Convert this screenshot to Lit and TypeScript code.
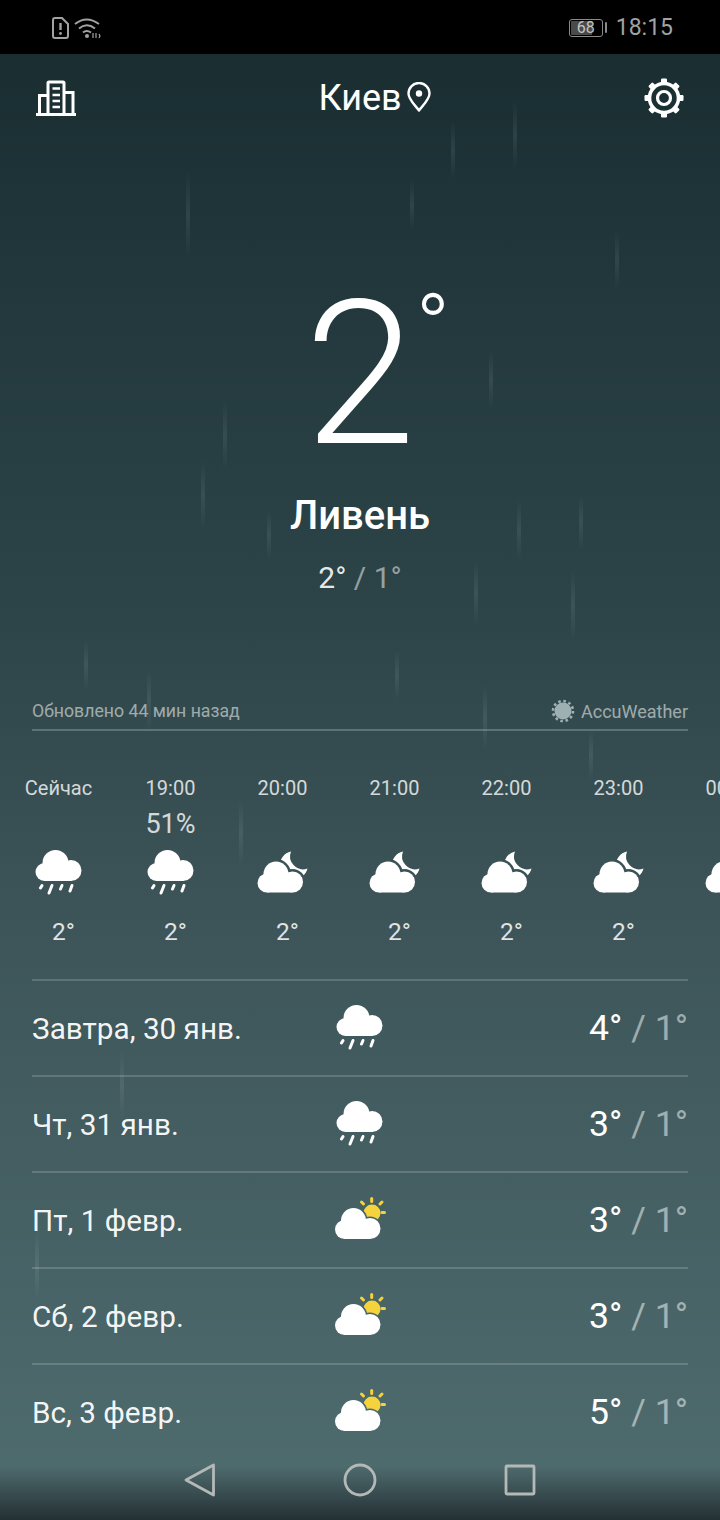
import { LitElement, html, css, svg } from 'lit';
import { customElement } from 'lit/decorators.js';

type IconName = 'rain' | 'night' | 'sun';

const hours: { time: string; pct: string; icon: IconName; temp: string }[] = [
  { time: 'Сейчас', pct: '', icon: 'rain', temp: '2°' },
  { time: '19:00', pct: '51%', icon: 'rain', temp: '2°' },
  { time: '20:00', pct: '', icon: 'night', temp: '2°' },
  { time: '21:00', pct: '', icon: 'night', temp: '2°' },
  { time: '22:00', pct: '', icon: 'night', temp: '2°' },
  { time: '23:00', pct: '', icon: 'night', temp: '2°' },
  { time: '00:00', pct: '', icon: 'night', temp: '2°' },
];

const days: { label: string; icon: IconName; high: string; low: string }[] = [
  { label: 'Завтра, 30 янв.', icon: 'rain', high: '4°', low: '1°' },
  { label: 'Чт, 31 янв.', icon: 'rain', high: '3°', low: '1°' },
  { label: 'Пт, 1 февр.', icon: 'sun', high: '3°', low: '1°' },
  { label: 'Сб, 2 февр.', icon: 'sun', high: '3°', low: '1°' },
  { label: 'Вс, 3 февр.', icon: 'sun', high: '5°', low: '1°' },
];

// x, top, height of the rain streaks in the background
const streaks = [
  [451, 120, 60], [186, 170, 90], [410, 180, 50], [513, 100, 70], [615, 230, 60],
  [223, 400, 70], [201, 460, 70], [489, 350, 60], [267, 510, 50], [517, 500, 60],
  [579, 495, 55], [474, 560, 65], [571, 570, 70], [84, 640, 50], [147, 670, 60],
  [395, 650, 50], [483, 685, 65], [589, 730, 50], [239, 800, 65], [120, 1050, 70],
  [35, 1230, 70],
];

function cloud(dx: number, dy: number) {
  return svg`<g transform="translate(${dx} ${dy})">
    <circle cx="18.5" cy="12.5" r="12.5"/>
    <circle cx="9.5" cy="21.5" r="9.5"/>
    <circle cx="35" cy="20.5" r="10.5"/>
    <rect x="9.5" y="14" width="25.5" height="17"/>
  </g>`;
}

function weatherIcon(name: IconName) {
  if (name === 'rain') {
    return html`<svg class="wicon" viewBox="0 0 52 48" fill="#fff">
      <circle cx="22.5" cy="14" r="13"/>
      <circle cx="11.5" cy="23" r="9"/>
      <circle cx="38" cy="21.5" r="10.5"/>
      <rect x="11.5" y="16" width="27" height="16"/>
      <g stroke="#fff" stroke-width="3" stroke-linecap="round">
        <path d="M9 36.5 7.5 39"/>
        <path d="M19 36.5 16 44"/>
        <path d="M29 36.5 27.5 40"/>
        <path d="M39 36.5 37 42"/>
      </g>
    </svg>`;
  }
  if (name === 'night') {
    return html`<svg class="wicon" viewBox="0 0 52 48" fill="#fff">
      <mask id="moon-cut" maskUnits="userSpaceOnUse" x="0" y="0" width="52" height="48">
        <rect width="52" height="48" fill="#fff"/>
        <g fill="#000" stroke="#000" stroke-width="5">${cloud(0.5, 12.5)}</g>
      </mask>
      <path d="M34 2.5A14 14 0 1 0 50.5 19.5 13 13 0 0 1 34 2.5Z" mask="url(#moon-cut)"/>
      ${cloud(0.5, 12.5)}
    </svg>`;
  }
  return html`<svg class="wicon" viewBox="0 0 52 48" fill="#fff">
    <mask id="sun-cut" maskUnits="userSpaceOnUse" x="0" y="0" width="52" height="48">
      <rect width="52" height="48" fill="#fff"/>
      <g fill="#000" stroke="#000" stroke-width="3">${cloud(1, 12)}</g>
    </mask>
    <g stroke="#f4d33c" stroke-width="3" stroke-linecap="round">
      <path d="M37.7 2.5V5.5"/>
      <path d="M27.5 6 29.5 8"/>
      <path d="M48 6 46 8"/>
      <path d="M48 16.5H50.5"/>
    </g>
    <circle cx="38" cy="17" r="8.5" fill="#f4d33c" mask="url(#sun-cut)"/>
    ${cloud(1, 12)}
  </svg>`;
}

function gear() {
  const teeth = [0, 45, 90, 135, 180, 225, 270, 315];
  return html`<svg class="hicon" viewBox="0 0 40 44" fill="none" stroke="#fff">
    <circle cx="20" cy="22" r="14.5" stroke-width="3.6"/>
    <circle cx="20" cy="22" r="6.5" stroke-width="3.2"/>
    ${teeth.map(
      (a) => svg`<rect x="17" y="2.5" width="6" height="6" rx="1.2" fill="#fff" stroke="none"
        transform="rotate(${a} 20 22)"/>`
    )}
  </svg>`;
}

@customElement('app-root')
export class AppRoot extends LitElement {
  static styles = css`
    :host {
      display: block;
      width: 720px;
      height: 1520px;
      overflow: hidden;
      font-family: Roboto, "Noto Sans", sans-serif;
      color: #fff;
    }

    .screen {
      position: relative;
      display: flex;
      flex-direction: column;
      height: 1520px;
      overflow: hidden;
      background: linear-gradient(#1a2e32 54px, #2c4448 600px, #3c5458 900px, #4e6b6e 1480px);
    }

    .streak {
      position: absolute;
      width: 4px;
      background: linear-gradient(transparent, rgba(255, 255, 255, 0.08), transparent);
    }

    .status {
      position: relative;
      display: flex;
      align-items: center;
      height: 54px;
      flex: none;
      padding: 1px 47px 0 52px;
      box-sizing: border-box;
      background: #000;
      color: #a2a2a2;
    }
    .sim { width: 17px; height: 22px; }
    .wifi { width: 27px; height: 22px; margin-left: 5px; }
    .batt {
      margin-left: auto;
      box-sizing: border-box;
      width: 34px;
      height: 18px;
      border: 1.5px solid #8a8a8a;
      border-radius: 3px;
      background: linear-gradient(90deg, #4a4a4a 68%, transparent 68%);
      background-clip: content-box;
      padding: 1px;
      color: #c4c4c4;
      font-size: 16px;
      line-height: 13px;
      text-align: center;
    }
    .nub { width: 2px; height: 11px; background: #8a8a8a; margin-left: 2px; border-radius: 1px; }
    .clock { font-size: 23px; margin-left: 9px; }

    .header {
      position: relative;
      display: grid;
      grid-template-columns: 1fr auto 1fr;
      align-items: center;
      padding: 22px 36px 0;
    }
    .hicon { width: 40px; height: 44px; display: block; }
    .city { font-size: 36px; line-height: 44px; }
    .header-right { display: flex; align-items: center; justify-content: space-between; padding-left: 9px; }
    .pin { width: 24px; height: 30px; display: block; margin-left: -4px; margin-top: -2px; }

    .hero { position: relative; display: flex; flex-direction: column; align-items: center; }
    .big {
      position: relative;
      margin-top: 160px;
      font-size: 200px;
      font-weight: 300;
      line-height: 190px;
      height: 190px;
    }
    .deg { position: absolute; left: 100%; top: 2px; font-size: 92px; line-height: 92px; font-weight: 300; }
    .cond { font-size: 40px; font-weight: 500; line-height: 48px; margin-top: 22px; }
    .range { font-size: 30px; line-height: 36px; margin-top: 20px; color: rgba(255, 255, 255, 0.9); }
    .range span, .temps span { color: rgba(255, 255, 255, 0.5); }

    .source {
      display: flex;
      align-items: center;
      justify-content: space-between;
      margin: 97px 32px 0;
      height: 36px;
      border-bottom: 2px solid rgba(255, 255, 255, 0.22);
      font-size: 17.7px;
      color: rgba(255, 255, 255, 0.55);
      box-sizing: content-box;
    }
    .brand { display: flex; align-items: center; gap: 6px; font-size: 18px; }
    .brand svg { width: 24px; height: 24px; }

    .hourly { display: flex; padding: 45px 0 0 2.5px; width: 900px; }
    .hour { width: 112px; flex: none; display: flex; flex-direction: column; align-items: center; }
    .time { font-size: 20px; line-height: 24px; color: rgba(255, 255, 255, 0.8); margin-bottom: 6px; }
    .pct { font-size: 27px; line-height: 36px; height: 36px; color: rgba(255, 255, 255, 0.8); }
    .wicon { width: 52px; height: 48px; display: block; }
    .hour .wicon { margin-top: 7px; }
    .htemp { font-size: 24.5px; line-height: 30px; margin-top: 20px; padding-left: 10px; color: rgba(255, 255, 255, 0.85); }

    .days { margin: 32px 32px 0; }
    .day {
      display: grid;
      grid-template-columns: 1fr auto 1fr;
      align-items: center;
      height: 96px;
      box-sizing: border-box;
      border-top: 2px solid rgba(255, 255, 255, 0.17);
    }
    .label { font-size: 29.7px; color: rgba(255, 255, 255, 0.95); }
    .temps { font-size: 35.6px; text-align: right; }

    .nav {
      position: absolute;
      left: 0;
      right: 0;
      bottom: 0;
      height: 60px;
      display: flex;
      justify-content: center;
      gap: 124px;
      padding-top: 2px;
      box-sizing: border-box;
      background: linear-gradient(transparent 10%, #243033 100%);
    }
    .nav svg { width: 36px; height: 36px; display: block; }
  `;

  render() {
    return html`
      <div class="screen">
        ${streaks.map(
          ([x, y, h]) => html`<div class="streak" style="left:${x}px;top:${y}px;height:${h}px"></div>`
        )}
        <div class="status">
          <svg class="sim" viewBox="0 0 17 22" fill="none" stroke="#a2a2a2" stroke-width="2">
            <path d="M3 1H10L16 7V19Q16 21 14 21H3Q1 21 1 19V3Q1 1 3 1Z"/>
            <path d="M8.5 6V13" stroke-width="2.4"/>
            <circle cx="8.5" cy="16.5" r="1.4" fill="#a2a2a2" stroke="none"/>
          </svg>
          <svg class="wifi" viewBox="0 0 27 22" fill="none" stroke="#a2a2a2" stroke-width="2">
            <path d="M1 7Q12.5 -2 25 7"/>
            <path d="M5 11.5Q12.5 5 21 11.5"/>
            <path d="M9 15.5Q12.5 12.5 17 15.5"/>
            <circle cx="13" cy="19" r="2" fill="#a2a2a2" stroke="none"/>
            <path d="M19 21V16M22 16V21M25 17 26 19 25 21" stroke-width="1.2"/>
          </svg>
          <div class="batt">68</div>
          <div class="nub"></div>
          <div class="clock">18:15</div>
        </div>

        <div class="header">
          <svg class="hicon" viewBox="0 0 40 44" fill="none" stroke="#fff" stroke-width="3">
            <path d="M12 37V7Q12 6 13 6H27Q28 6 28 7V37"/>
            <path d="M12 19.5H3.5V37M28 16.5H37V37"/>
            <path d="M0 38.5H41"/>
            <path d="M16.5 12.5H24M16.5 19H24M16.5 25H24M16.5 31H24" stroke-width="2.6"/>
          </svg>
          <div class="city">Киев</div>
          <div class="header-right">
            <svg class="pin" viewBox="0 0 24 30" fill="none" stroke="#fff" stroke-width="2.4">
              <path d="M12 28.5C8 23 1.5 17.5 1.5 11.5A10.5 10.5 0 0 1 22.5 11.5C22.5 17.5 16 23 12 28.5Z" stroke-linejoin="round"/>
              <circle cx="12" cy="11.5" r="3.2" fill="#fff" stroke="none"/>
            </svg>
            ${gear()}
          </div>
        </div>

        <div class="hero">
          <div class="big">2<span class="deg">°</span></div>
          <div class="cond">Ливень</div>
          <div class="range">2° <span>/ 1°</span></div>
        </div>

        <div class="source">
          <div>Обновлено 44 мин назад</div>
          <div class="brand">
            <svg viewBox="0 0 24 24" fill="#9fb0b2">
              <circle cx="12" cy="12" r="8.5"/>
              <circle cx="12" cy="12" r="10" fill="none" stroke="#9fb0b2" stroke-width="2.6" stroke-dasharray="2.6 2.64"/>
            </svg>
            AccuWeather
          </div>
        </div>

        <div class="hourly">
          ${hours.map(
            (h) => html`<div class="hour">
              <div class="time">${h.time}</div>
              <div class="pct">${h.pct}</div>
              ${weatherIcon(h.icon)}
              <div class="htemp">${h.temp}</div>
            </div>`
          )}
        </div>

        <div class="days">
          ${days.map(
            (d) => html`<div class="day">
              <div class="label">${d.label}</div>
              ${weatherIcon(d.icon)}
              <div class="temps">${d.high} <span>/ ${d.low}</span></div>
            </div>`
          )}
        </div>

        <div class="nav">
          <svg viewBox="0 0 36 36" fill="none" stroke="#b4b8b8" stroke-width="2.8" stroke-linejoin="round">
            <path d="M31.5 3 4 18 31.5 33Z"/>
          </svg>
          <svg viewBox="0 0 36 36" fill="none" stroke="#b4b8b8" stroke-width="2.8">
            <circle cx="18" cy="18" r="15"/>
          </svg>
          <svg viewBox="0 0 36 36" fill="none" stroke="#b4b8b8" stroke-width="2.8" stroke-linejoin="round">
            <rect x="4" y="4" width="28" height="28" rx="1"/>
          </svg>
        </div>
      </div>
    `;
  }
}
